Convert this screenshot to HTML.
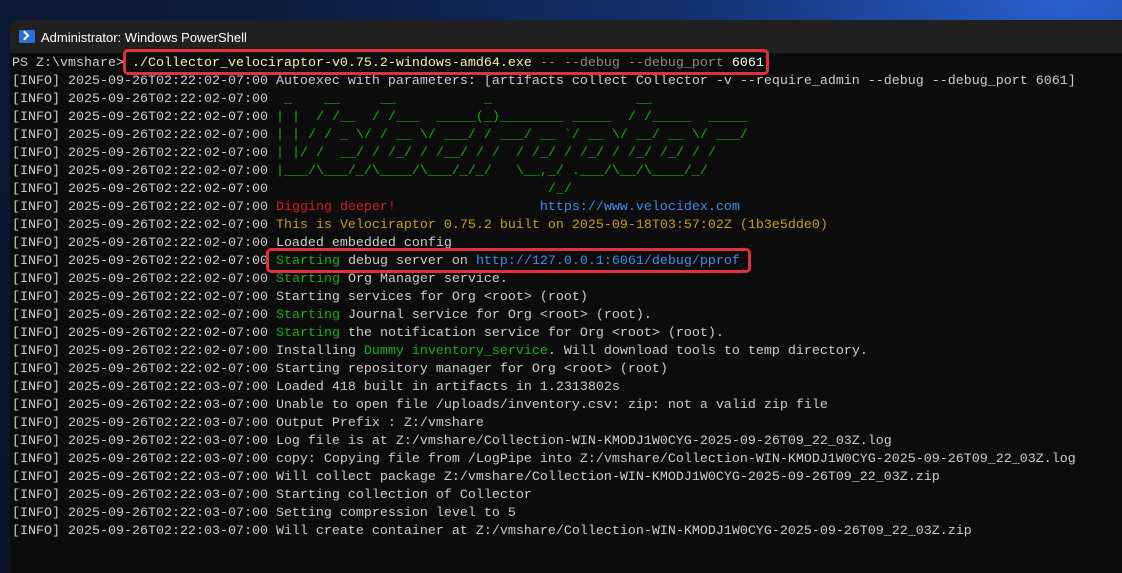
<!DOCTYPE html>
<html><head><meta charset="utf-8"><style>
html,body{margin:0;padding:0;width:1122px;height:573px;overflow:hidden;background:#0a1a33;}
body{position:relative;background:radial-gradient(ellipse at 95% 0%,#2a5fd0 0%,#12306e 25%,#0b1a38 55%,#0a1426 100%);}
.win{position:absolute;left:10px;top:20px;width:1112px;height:553px;background:#0c0c0c;border-radius:8px 0 0 0;overflow:hidden;}
.title{height:33px;background:#202020;color:#fff;font:13px "Liberation Sans",sans-serif;line-height:35px;padding-left:31px;position:relative;}
.ico{position:absolute;left:9px;top:10px;width:16px;height:13px;background:#2a6fd6;border-radius:1px;}
.ico:after{content:"";position:absolute;left:2px;top:2px;width:5px;height:5px;border-right:2px solid #fff;border-bottom:2px solid #fff;transform:rotate(-45deg);}
pre{margin:0;position:absolute;left:2px;top:35px;font-family:"Liberation Mono",monospace;font-size:13.33px;line-height:18px;color:#cccccc;white-space:pre;}
.g{color:#16b00c}.r{color:#d0202a}.y{color:#c7a000}.b{color:#3b8eea}.cy{color:#f9f1a5}.gr{color:#8a8a8a}.w{color:#fff}
.box{position:absolute;border:3px solid #e0323c;border-radius:5px;}
</style></head><body>
<div class="win">
<div class="title"><div class="ico"></div>Administrator: Windows PowerShell</div>
<pre>PS Z:\vmshare&gt; <span class="cy">./Collector_velociraptor-v0.75.2-windows-amd64.exe</span> <span class="gr">-- --debug --debug_port</span> <span class="w">6061</span>
[INFO] 2025-09-26T02:22:02-07:00 Autoexec with parameters: [artifacts collect Collector -v --require_admin --debug --debug_port 6061]
[INFO] 2025-09-26T02:22:02-07:00 <span class="g"> _    __     __           _                  __</span>
[INFO] 2025-09-26T02:22:02-07:00 <span class="g">| |  / /__  / /___  _____(_)________ _____  / /_____  _____</span>
[INFO] 2025-09-26T02:22:02-07:00 <span class="g">| | / / _ \/ / __ \/ ___/ / ___/ __ `/ __ \/ __/ __ \/ ___/</span>
[INFO] 2025-09-26T02:22:02-07:00 <span class="g">| |/ /  __/ / /_/ / /__/ / /  / /_/ / /_/ / /_/ /_/ / /</span>
[INFO] 2025-09-26T02:22:02-07:00 <span class="g">|___/\___/_/\____/\___/_/_/   \__,_/ .___/\__/\____/_/</span>
[INFO] 2025-09-26T02:22:02-07:00 <span class="g">                                  /_/</span>
[INFO] 2025-09-26T02:22:02-07:00 <span class="r">Digging deeper!</span>                  <span class="b">https://www.velocidex.com</span>
[INFO] 2025-09-26T02:22:02-07:00 <span class="y">This is Velociraptor 0.75.2 built on 2025-09-18T03:57:02Z (1b3e5dde0)</span>
[INFO] 2025-09-26T02:22:02-07:00 Loaded embedded config
[INFO] 2025-09-26T02:22:02-07:00 <span class="g">Starting</span> debug server on <span class="b">http://127.0.0.1:6061/debug/pprof</span>
[INFO] 2025-09-26T02:22:02-07:00 <span class="g">Starting</span> Org Manager service.
[INFO] 2025-09-26T02:22:02-07:00 Starting services for Org &lt;root&gt; (root)
[INFO] 2025-09-26T02:22:02-07:00 <span class="g">Starting</span> Journal service for Org &lt;root&gt; (root).
[INFO] 2025-09-26T02:22:02-07:00 <span class="g">Starting</span> the notification service for Org &lt;root&gt; (root).
[INFO] 2025-09-26T02:22:02-07:00 Installing <span class="g">Dummy inventory_service</span>. Will download tools to temp directory.
[INFO] 2025-09-26T02:22:02-07:00 Starting repository manager for Org &lt;root&gt; (root)
[INFO] 2025-09-26T02:22:03-07:00 Loaded 418 built in artifacts in 1.2313802s
[INFO] 2025-09-26T02:22:03-07:00 Unable to open file /uploads/inventory.csv: zip: not a valid zip file
[INFO] 2025-09-26T02:22:03-07:00 Output Prefix : Z:/vmshare
[INFO] 2025-09-26T02:22:03-07:00 Log file is at Z:/vmshare/Collection-WIN-KMODJ1W0CYG-2025-09-26T09_22_03Z.log
[INFO] 2025-09-26T02:22:03-07:00 copy: Copying file from /LogPipe into Z:/vmshare/Collection-WIN-KMODJ1W0CYG-2025-09-26T09_22_03Z.log
[INFO] 2025-09-26T02:22:03-07:00 Will collect package Z:/vmshare/Collection-WIN-KMODJ1W0CYG-2025-09-26T09_22_03Z.zip
[INFO] 2025-09-26T02:22:03-07:00 Starting collection of Collector
[INFO] 2025-09-26T02:22:03-07:00 Setting compression level to 5
[INFO] 2025-09-26T02:22:03-07:00 Will create container at Z:/vmshare/Collection-WIN-KMODJ1W0CYG-2025-09-26T09_22_03Z.zip</pre>
</div>
<div class="box" style="left:123px;top:49px;width:640px;height:20px;"></div>
<div class="box" style="left:266px;top:248px;width:479px;height:19px;"></div>
</body></html>
